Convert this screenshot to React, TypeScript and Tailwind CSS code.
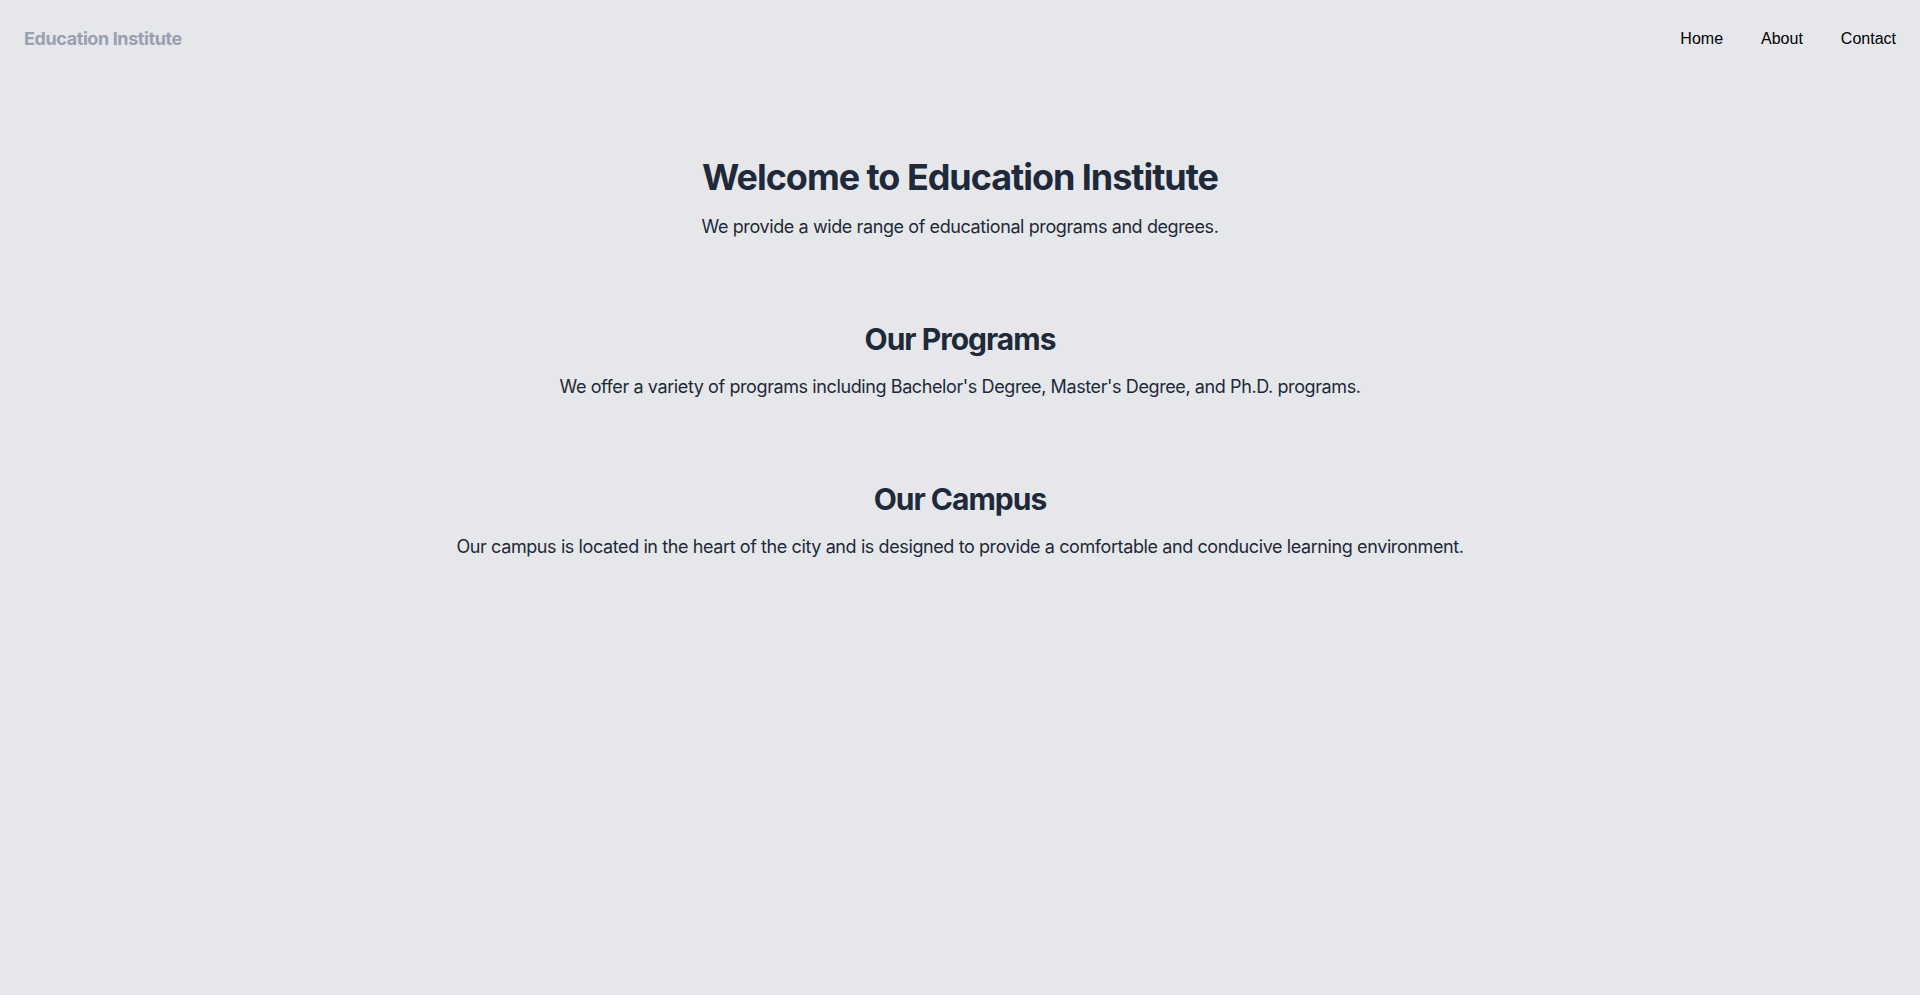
export default function App() {
  const links = ["Home", "About", "Contact"];

  return (
    <div className="min-h-screen bg-gray-200 text-gray-800 font-['Inter',sans-serif] tracking-tight">
      {/* Header */}
      <header className="flex items-center justify-between px-6 pt-[25px] pb-6">
        <span className="text-lg font-bold text-gray-400">Education Institute</span>
        <nav className="flex gap-[38px] font-['Liberation_Sans',Arial,sans-serif] tracking-normal text-black">
          {links.map((link) => (
            <a key={link} href="#" className="text-base">
              {link}
            </a>
          ))}
        </nav>
      </header>

      <main className="pt-20">
        {/* Hero */}
        <section className="pb-10 text-center">
          <h1 className="mb-4 text-4xl font-bold tracking-[-0.029em]">Welcome to Education Institute</h1>
          <p className="text-lg">We provide a wide range of educational programs and degrees.</p>
        </section>

        <section className="py-10 text-center">
          <h2 className="mb-4 text-3xl font-bold tracking-[-0.033em]">Our Programs</h2>
          <p className="text-lg">
            We offer a variety of programs including Bachelor's Degree, Master's Degree, and Ph.D. programs.
          </p>
        </section>

        <section className="py-10 text-center">
          <h2 className="mb-4 text-3xl font-bold tracking-[-0.033em]">Our Campus</h2>
          <p className="text-lg">
            Our campus is located in the heart of the city and is designed to provide a comfortable and conducive
            learning environment.
          </p>
        </section>
      </main>
    </div>
  );
}
